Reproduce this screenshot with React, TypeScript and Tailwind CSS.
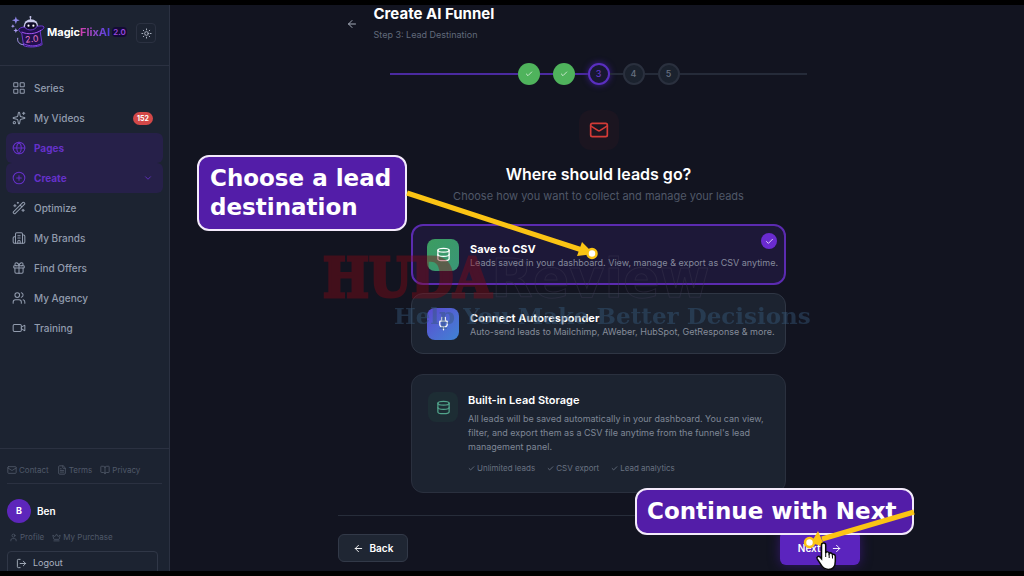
import React from 'react';
import {
  ArrowLeft,
  ArrowRight,
  BookOpen,
  Building2,
  Check,
  ChevronDown,
  CirclePlus,
  Crown,
  Database,
  FileText,
  Gift,
  Globe,
  LayoutGrid,
  LogOut,
  Mail,
  Plug,
  Sparkles,
  Sun,
  User,
  Users,
  Video,
  WandSparkles,
} from 'lucide-react';

const navItems = [
  { label: 'Series', icon: LayoutGrid },
  { label: 'My Videos', icon: Sparkles, badge: '152' },
  { label: 'Pages', icon: Globe, active: true },
  { label: 'Create', icon: CirclePlus, active: true, expandable: true },
  { label: 'Optimize', icon: WandSparkles },
  { label: 'My Brands', icon: Building2 },
  { label: 'Find Offers', icon: Gift },
  { label: 'My Agency', icon: Users },
  { label: 'Training', icon: Video },
];

const Logo: React.FC = () => (
  <a href="#" className="flex items-center text-white">
    <svg viewBox="0 0 38 34" className="h-[34px] w-[37px]" fill="none" aria-hidden="true">
      <path d="M6 1l1 3 3 1-3 1-1 3-1-3-3-1 3-1z" fill="#8f86e8" />
      <path d="M3 9l.6 1.4L5 11l-1.4.6L3 13l-.6-1.4L1 11l1.400-.6zM6 13l.7 1.700L8.500 15.500l-1.800.7L6 18l-.7-1.800-1.800-.7 1.800-.8z" fill="#a99bf0" />
      <circle cx="21" cy="1.500" r="1" fill="#c9c7ee" />
      <path d="M21 2v3" stroke="#c9c7ee" />
      <path d="M14 15v-4a7.500 7 0 0 1 15 0v4z" fill="#c9c9ea" />
      <rect x="15.500" y="7" width="12" height="8" rx="4" fill="#100c28" />
      <circle cx="19" cy="10.500" r="1.100" fill="#fff" />
      <circle cx="24" cy="10.500" r="1.100" fill="#fff" />
      <path d="M9 14c2-2 5-2 6-2 3 4 10 4 13-1 3 0 6-1 7 1-1 3-3 3-4 4l2 14c-5 3-15 3-19 1l-2-13c-2-1-3-2-3-4z" fill="#21104f" stroke="#6c3bd0" strokeWidth="1" />
      <path d="M12 17c6 3 15 2 20-2" stroke="#a855f7" />
      <path d="M14 29c6 3 13 3 18 0" stroke="#8a46e8" />
      <path d="M8 23c-1 4 2 7 6 7" stroke="#a99bf0" />
      <text x="16" y="28" fill="#e879c8" fontSize="9" fontFamily="Inter, sans-serif" transform="rotate(-6 16 28)">2.0</text>
    </svg>
    <span className="text-[11px] font-bold">
      Magic
      <span className="bg-linear-to-r from-[#d33cae] to-[#4b3be0] bg-clip-text text-transparent">FlixAI</span>
    </span>
    <span className="ml-0.5 rounded-sm bg-[#130b35] px-px text-[8px] leading-[10px] font-semibold text-[#9a47df]">2.0</span>
  </a>
);

const Sidebar: React.FC = () => (
  <aside className="flex w-[170px] shrink-0 flex-col overflow-hidden border-r border-[#2b3141] bg-[#1c2331] text-[#929cae]">
    <div className="flex h-[61px] shrink-0 items-start justify-between border-b border-[#2b3141] pt-2.5 pr-[13px] pl-2.5">
      <Logo />
      <button aria-label="Toggle theme" className="mt-2 flex size-5 items-center justify-center rounded border border-[#2b3141] text-[#b3bac8]">
        <Sun size={11} />
      </button>
    </div>
    <nav className="flex flex-1 flex-col px-1.5 pt-[7px]">
      {navItems.map(({ label, icon: Icon, badge, active, expandable }) => (
        <a
          key={label}
          href="#"
          className={`flex h-[30px] items-center gap-2 rounded-md pr-2.5 pl-1.5 text-[10px] ${
            active ? 'bg-[#262049] font-bold text-[#6531c9]' : 'font-medium'
          }`}
        >
          <Icon size={14} strokeWidth={1.75} />
          {label}
          {badge && (
            <span className="ml-auto rounded-full bg-[#d34848] px-1 text-[7px] leading-[13px] font-bold text-white">{badge}</span>
          )}
          {expandable && <ChevronDown size={10} className="ml-auto" />}
        </a>
      ))}
    </nav>
    <div className="h-[123px] shrink-0 border-t border-[#2b3141] px-[7px] pt-3.5">
      <div className="flex gap-2 border-b border-[#2b3141] pb-1.5 text-[8px] leading-[14px] text-[#505969]">
        <a href="#" className="flex items-center gap-0.5"><Mail size={10} />Contact</a>
        <a href="#" className="flex items-center gap-0.5"><FileText size={10} />Terms</a>
        <a href="#" className="flex items-center gap-0.5"><BookOpen size={10} />Privacy</a>
      </div>
      <div className="mt-[15px] flex items-center gap-1.5">
        <span className="flex size-6 items-center justify-center rounded-full bg-[#5d26bb] text-[9px] font-bold text-white">B</span>
        <span className="text-[10px] font-semibold text-white">Ben</span>
      </div>
      <div className="mt-2 flex gap-2 pl-0.5 text-[8px] leading-3 text-[#505969]">
        <a href="#" className="flex items-center gap-0.5"><User size={9} />Profile</a>
        <a href="#" className="flex items-center gap-0.5"><Crown size={9} />My Purchase</a>
      </div>
      <button className="mt-2 flex h-6 w-[151px] items-center gap-1.5 rounded border border-[#303747] px-2 text-[9px] text-[#aab2c0]">
        <LogOut size={11} />Logout
      </button>
    </div>
  </aside>
);

const Stepper: React.FC = () => (
  <ol className="mx-auto mt-[21px] flex w-4/5 items-center text-[9px] font-medium">
    <li aria-hidden="true" className="h-0.5 flex-1 bg-[#4a2aa0]" />
    {[1, 2, 3, 4, 5].map((step) => (
      <React.Fragment key={step}>
        {step > 1 && <li aria-hidden="true" className={`h-0.5 w-[13px] ${step <= 3 ? 'bg-[#4a2aa0]' : 'bg-[#252b39]'}`} />}
        <li
          className={`flex size-[22px] items-center justify-center rounded-full ${
            step < 3
              ? 'bg-[#4fb35c] text-white'
              : step === 3
                ? 'border-2 border-[#5a2fc0] bg-[#181832] text-[#6538cb] shadow-[0_0_6px_#3b1e8c]'
                : 'border-2 border-[#2a303e] bg-[#1b222e] text-[#677080]'
          }`}
        >
          {step < 3 ? <Check size={8} /> : step}
        </li>
      </React.Fragment>
    ))}
    <li aria-hidden="true" className="h-0.5 flex-1 bg-[#252b39]" />
  </ol>
);

const Destinations: React.FC = () => (
  <div className="mx-auto mt-5 flex w-[375px] max-w-full flex-col gap-2">
    <button className="relative flex h-[61px] items-center gap-[11px] rounded-xl border-2 border-[#5b2bb0] bg-[#1d1838] px-3.5 text-left">
      <span className="flex size-8 shrink-0 items-center justify-center rounded-lg bg-linear-to-br from-[#3c9d60] to-[#3a9577] text-white">
        <Database size={15} />
      </span>
      <span className="whitespace-nowrap">
        <span className="block text-[11px] leading-4 font-bold text-white">Save to CSV</span>
        <span className="block text-[9px] leading-3 text-[#858a9c]">Leads saved in your dashboard. View, manage &amp; export as CSV anytime.</span>
      </span>
      <span className="absolute top-[7px] right-[7px] flex size-4 items-center justify-center rounded-full bg-[#6a2bd0] text-white">
        <Check size={9} />
      </span>
    </button>
    <button className="flex h-[61px] items-center gap-[11px] rounded-xl border border-[#2f3644] bg-[#1c2330] px-[15px] text-left">
      <span className="flex size-8 shrink-0 items-center justify-center rounded-lg bg-linear-to-br from-[#5947d0] to-[#3d83d4] text-white">
        <Plug size={15} />
      </span>
      <span className="whitespace-nowrap">
        <span className="block text-[11px] leading-4 font-bold text-white">Connect Autoresponder</span>
        <span className="block text-[9px] leading-3 text-[#858c9a]">Auto-send leads to Mailchimp, AWeber, HubSpot, GetResponse &amp; more.</span>
      </span>
    </button>
    <div className="mt-3 flex gap-2.5 rounded-xl border border-[#2a303e] bg-[#1c2330] px-4 pt-[17px] pb-[18px]">
      <span className="flex size-[30px] shrink-0 items-center justify-center rounded-lg bg-[#1d2d34] text-[#51a48b]">
        <Database size={15} />
      </span>
      <div>
        <h3 className="text-[11px] leading-4 font-semibold text-white">Built-in Lead Storage</h3>
        <p className="mt-1 text-[9px] leading-[14px] text-[#7f8796]">
          All leads will be saved automatically in your dashboard. You can view, filter, and export them as a CSV file anytime from the funnel's lead management panel.
        </p>
        <div className="mt-2 flex gap-3 text-[8px] leading-3 text-[#687180]">
          <span className="flex items-center gap-0.5"><Check size={7} strokeWidth={3} />Unlimited leads</span>
          <span className="flex items-center gap-0.5"><Check size={7} strokeWidth={3} />CSV export</span>
          <span className="flex items-center gap-0.5"><Check size={7} strokeWidth={3} />Lead analytics</span>
        </div>
      </div>
    </div>
  </div>
);

// Tutorial callouts, pointers and the watermark float over the app.
const Overlay: React.FC = () => (
  <div className="pointer-events-none absolute inset-0">
    <div className="absolute top-[238px] left-[323px] flex items-baseline leading-[80px] whitespace-nowrap opacity-40">
      <span className="font-['DejaVu_Serif_Condensed','DejaVu_Serif',serif] text-[54px] font-bold text-[#8a0a16] [-webkit-text-stroke:3px_#8a0a16]">HUDA</span>
      <span className="font-['DejaVu_Sans',sans-serif] text-[54px] font-bold text-transparent [-webkit-text-stroke:1px_#3d3952]">Review</span>
    </div>
    <div className="absolute top-[302px] left-[394px] font-['DejaVu_Serif',serif] text-[23px] leading-7 font-bold whitespace-nowrap text-[#36587a] opacity-45">
      Help You Make Better Decisions
    </div>
    <div className="absolute top-[155px] left-[197px] rounded-xl border-2 border-[#f3eafb] bg-[#531da8] py-[7px] pr-3.5 pl-[11px] font-['DejaVu_Sans',sans-serif] text-[23px] leading-[29px] font-bold text-white">
      Choose a lead<br />destination
    </div>
    <div className="absolute top-[488px] left-[635px] rounded-xl border-2 border-[#f3eafb] bg-[#531da8] py-[7px] pr-4 pl-2.5 font-['DejaVu_Sans',sans-serif] text-[23px] leading-[29px] font-bold whitespace-nowrap text-white">
      Continue with Next
    </div>
    <svg viewBox="0 0 1024 576" className="absolute top-0 left-0 h-[576px] w-[1024px]" fill="none" aria-hidden="true">
      <path d="M407 193L582 250M914 512L822 539" stroke="#fbc414" strokeWidth="5" />
      <path d="M582 242l12 12-17 2zM818 531l-7 12 14 4z" fill="#fbc414" />
      <circle cx="592" cy="253.500" r="4.500" fill="#fff" stroke="#fbc414" strokeWidth="2.500" />
      <circle cx="809.500" cy="542.500" r="4.500" fill="#fff" stroke="#fbc414" strokeWidth="2.500" />
      <path d="M821.500 545c0-2.700 4.200-2.700 4.200 0v8c.6-1.800 3.300-1.400 3.500.6.9-1.300 3.200-.7 3.300 1.200 1-1 2.800-.3 2.800 1.500v5c0 5-2.300 8.200-7 8.200-4.300 0-6-2.200-7.700-5.300l-3.400-5.400c-1-2 1.400-3.300 2.800-1.800l1.500 1.700z" fill="#fff" stroke="#090909" strokeWidth="1.500" />
      <path d="M825.700 553v4M829.200 554v4M832.500 555.500v3" stroke="#090909" />
    </svg>
  </div>
);

const App: React.FC = () => {
  return (
    <div className="relative flex h-screen overflow-hidden border-y-[5px] border-black bg-[#121420] font-['Inter',sans-serif]">
      <Sidebar />
      <main className="min-w-0 flex-1 overflow-hidden pl-[3px]">
        <div className="mx-auto max-w-[522px]">
          <header className="flex items-center gap-2">
            <button aria-label="Go back" className="flex size-7 items-center justify-center text-[#a4abb8]">
              <ArrowLeft size={12} />
            </button>
            <div>
              <h1 className="text-[15px] leading-[18px] font-bold text-white">Create AI Funnel</h1>
              <p className="mt-1 text-[9px] leading-[15px] text-[#616a7b]">Step 3: Lead Destination</p>
            </div>
          </header>
          <Stepper />
          <div className="mx-auto mt-[25px] flex size-10 items-center justify-center rounded-xl bg-[#1b1520] text-[#d33b37]">
            <Mail size={20} />
          </div>
          <h2 className="mt-3.5 text-center text-base leading-5 font-semibold text-white">Where should leads go?</h2>
          <p className="mt-1 text-center text-[11px] leading-4 text-[#505868]">Choose how you want to collect and manage your leads</p>
          <Destinations />
          <div className="mt-[22px] flex items-center justify-between border-t border-[#272d3a] pt-[15px] text-[10px] font-semibold text-white">
            <button className="flex h-7 items-center gap-1.5 rounded-md border border-[#323948] bg-[#1f2633] px-3.5">
              <ArrowLeft size={11} />Back
            </button>
            <button className="flex h-[34px] items-center gap-2.5 rounded-md bg-[#5b24be] px-[18px] shadow-[0_0_12px_#33186b]">
              Next<ArrowRight size={11} />
            </button>
          </div>
        </div>
      </main>
      <div className="absolute inset-x-0 -top-[5px] -bottom-[5px]">
        <Overlay />
      </div>
    </div>
  );
};

export default App;
